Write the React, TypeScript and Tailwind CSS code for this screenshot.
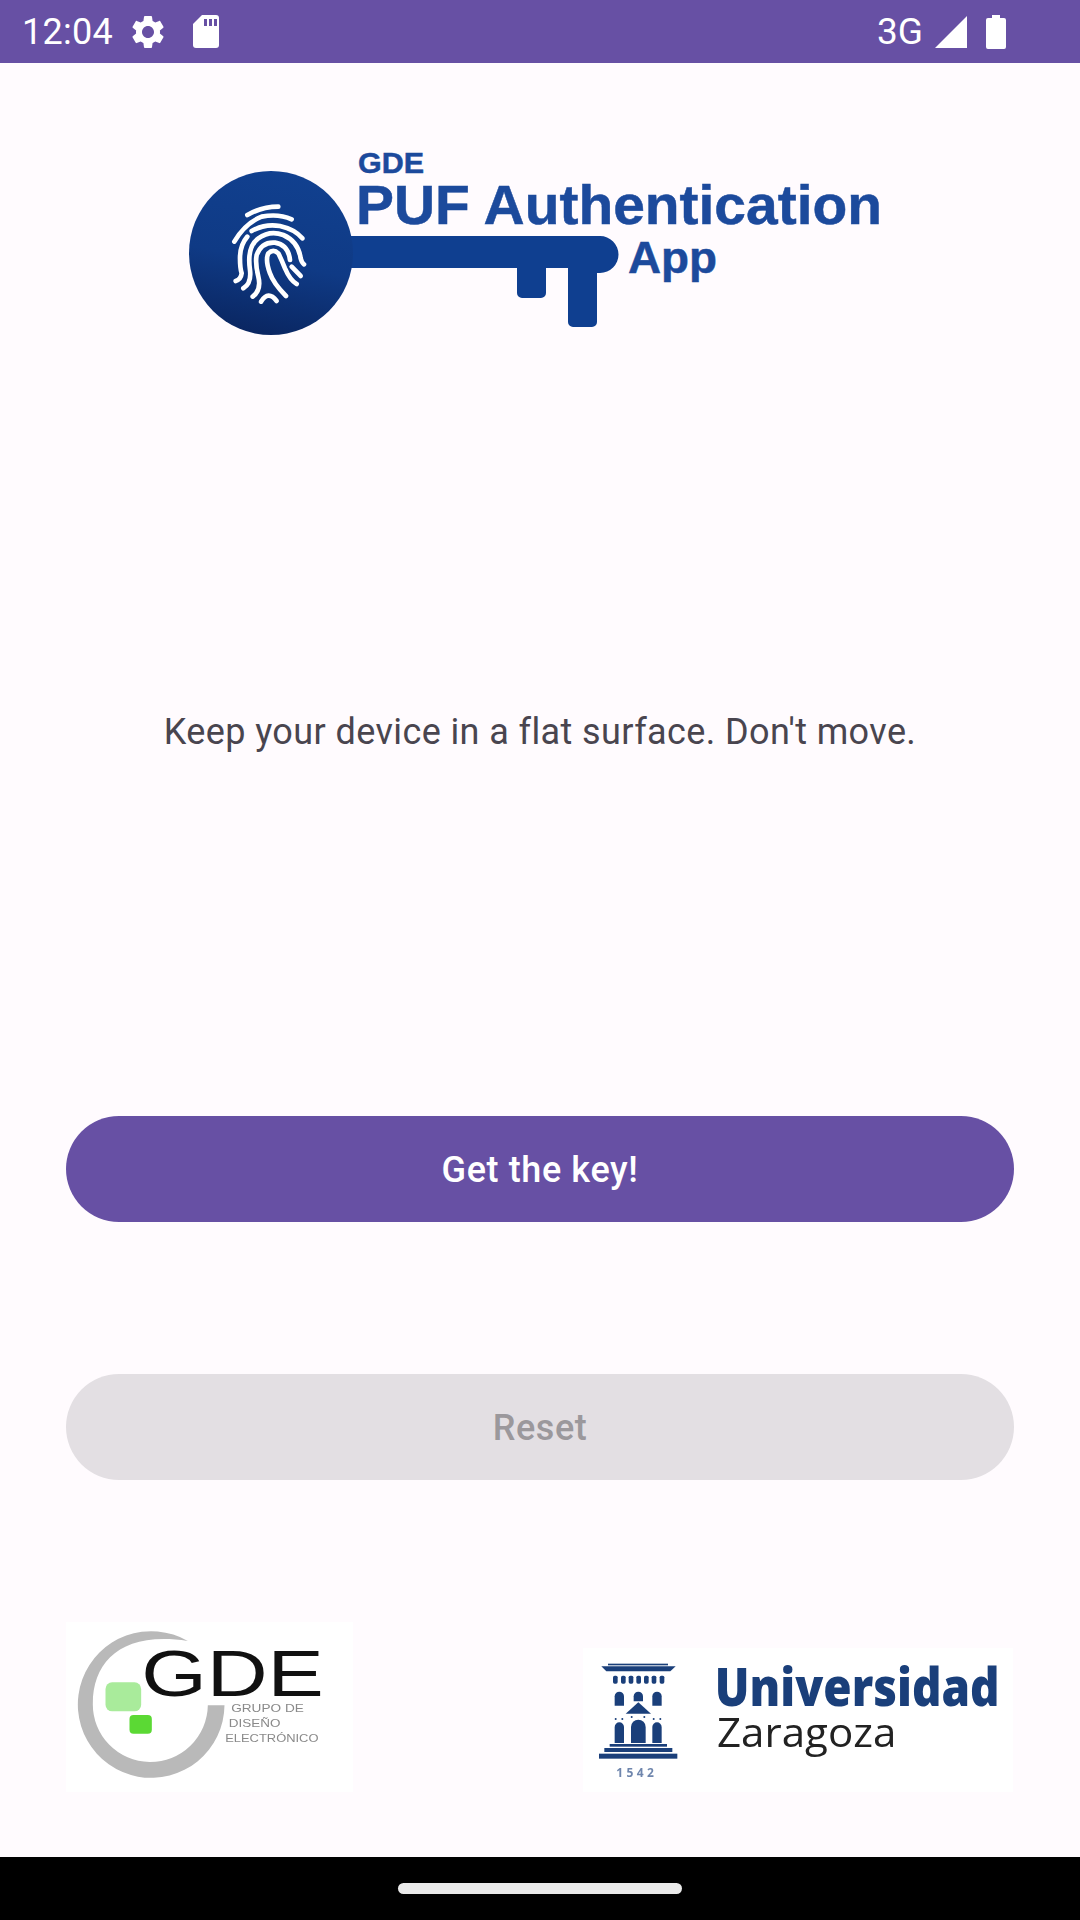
import React from 'react';

const GEAR =
  'M19.14,12.94c0.04-0.3,0.06-0.61,0.06-0.94c0-0.32-0.02-0.64-0.07-0.94l2.03-1.58c0.18-0.14,0.23-0.41,0.12-0.61l-1.92-3.32c-0.12-0.22-0.37-0.29-0.59-0.22l-2.39,0.96c-0.5-0.38-1.03-0.7-1.62-0.94L14.4,2.81c-0.04-0.24-0.24-0.41-0.48-0.41h-3.84c-0.24,0-0.43,0.17-0.47,0.41L9.25,5.35C8.66,5.59,8.12,5.92,7.63,6.29L5.24,5.33c-0.22-0.08-0.47,0-0.59,0.22L2.74,8.87C2.62,9.08,2.66,9.34,2.86,9.48l2.03,1.58C4.84,11.36,4.8,11.69,4.8,12s0.02,0.64,0.07,0.94l-2.03,1.58c-0.18,0.14-0.23,0.41-0.12,0.61l1.92,3.32c0.12,0.22,0.37,0.29,0.59,0.22l2.39-0.96c0.5,0.38,1.03,0.7,1.62,0.94l0.36,2.54c0.05,0.24,0.24,0.41,0.48,0.41h3.84c0.24,0,0.44-0.17,0.47-0.41l0.36-2.54c0.59-0.24,1.13-0.56,1.62-0.94l2.39,0.96c0.22,0.08,0.47,0,0.59-0.22l1.92-3.32c0.12-0.22,0.07-0.47-0.12-0.61L19.14,12.94z M12,15.6c-1.98,0-3.6-1.62-3.6-3.6s1.62-3.6,3.6-3.6s3.6,1.62,3.6,3.6S13.98,15.6,12,15.6z';

const StatusBar: React.FC = () => (
  <div className="h-[63px] bg-[#6750A4] flex items-center text-white shrink-0 font-['Roboto',sans-serif]">
    <span className="ml-[22px] w-[106px] text-[36px] leading-none tracking-[0.3px]">12:04</span>
    <svg viewBox="0 0 24 24" className="w-10 h-10 fill-white">
      <path d={GEAR} />
    </svg>
    <svg viewBox="0 0 26 33" className="ml-[25px] w-[26px] h-[33px]">
      <path d="M9 0h14a3 3 0 0 1 3 3v27a3 3 0 0 1-3 3H3a3 3 0 0 1-3-3V9z" fill="#fff" />
      <path d="M11 4h3v7h-3zM16 4h3v7h-3zM21 4h3v7h-3z" fill="#6750A4" />
    </svg>
    <span className="ml-auto text-[37px] leading-none">3G</span>
    <svg viewBox="0 0 32 32" className="ml-[12px] w-8 h-8">
      <path d="M32 0v32H0z" fill="#fff" />
    </svg>
    <svg viewBox="0 0 20 34" className="ml-[19px] mr-[74px] w-5 h-[34px]">
      <path d="M6 0h8v3h4a2 2 0 0 1 2 2v27a2 2 0 0 1-2 2H2a2 2 0 0 1-2-2V5a2 2 0 0 1 2-2h4z" fill="#fff" />
    </svg>
  </div>
);

// key logo, coordinates are page px offset by (189,140)
const KeyLogo: React.FC = () => (
  <svg viewBox="0 0 700 200" className="ml-[189px] mt-[77px] w-[700px] h-[200px] block">
    <defs>
      <linearGradient id="head" x1="0.6" y1="0" x2="0.4" y2="1">
        <stop offset="0" stopColor="#11408F" />
        <stop offset="0.55" stopColor="#0F3A85" />
        <stop offset="1" stopColor="#0A2661" />
      </linearGradient>
    </defs>
    <path
      d="M150 96H411a18.500 18.500 0 0 1 0 37h-3v49a5 5 0 0 1-5 5h-19a5 5 0 0 1-5-5v-54H357v25a5 5 0 0 1-5 5h-19a5 5 0 0 1-5-5v-25H150z"
      fill="#0F3F90"
    />
    <circle cx="82" cy="113" r="82" fill="url(#head)" />
    <g
      transform="translate(1 30) scale(0.3333)"
      fill="none"
      stroke="#fff"
      strokeWidth="14"
      strokeLinecap="round"
    >
      <path d="M172 135Q215 110 265 110" />
      <path d="M133 215Q165 160 215 140Q265 130 305 148" />
      <path d="M185 183Q225 160 270 168Q315 178 337 205" />
      <path d="M172 200Q150 225 150 265Q150 295 155 310Q153 328 137 333" />
      <path d="M160 355Q185 340 180 300Q170 230 205 205Q240 180 280 195Q325 215 332 265Q335 278 342 283" />
      <path d="M188 380Q215 360 205 320Q195 280 200 255Q215 215 255 218Q295 225 300 270" />
      <path d="M288 378Q250 340 240 310Q225 270 235 250Q250 235 265 250Q275 270 285 295Q300 330 320 342" />
      <path d="M305 290L332 318" />
      <path d="M213 395Q235 360 260 393" />
    </g>
    <g
      fill="#1C4A9C"
      stroke="#1C4A9C"
      strokeWidth="0.5"
      fontFamily="'Liberation Sans', Arial, sans-serif"
      fontWeight="700"
    >
      <text x="169" y="33" fontSize="30" textLength="66" lengthAdjust="spacingAndGlyphs">GDE</text>
      <text x="167" y="84" fontSize="56" textLength="526" lengthAdjust="spacingAndGlyphs">PUF Authentication</text>
      <text x="439" y="133" fontSize="44" textLength="89" lengthAdjust="spacingAndGlyphs">App</text>
    </g>
  </svg>
);

const GdeLogo: React.FC = () => (
  <div className="w-[287px] h-[170px] bg-white">
    <svg viewBox="20 35 860 510" className="w-full h-full blur-[0.6px]">
      <path d="M385 92A220 220 0 1 0 495 285H445A172 172 0 0 1 100 280C100 150 190 62 385 92z" fill="#B9B9B9" />
      <rect x="138" y="216" width="107" height="87" rx="20" fill="#A9EB9B" />
      <rect x="210" y="314" width="67" height="56" rx="12" fill="#5BD934" />
      <text
        x="245"
        y="258"
        fontSize="193"
        textLength="548"
        lengthAdjust="spacingAndGlyphs"
        fill="#111"
        fontFamily="'Liberation Sans', Arial, sans-serif"
      >
        GDE
      </text>
      <g fill="#8a8a8a" fontSize="34" fontFamily="'Liberation Sans', Arial, sans-serif">
        <text x="515" y="304" textLength="218" lengthAdjust="spacingAndGlyphs">GRUPO DE</text>
        <text x="508" y="350" textLength="155" lengthAdjust="spacingAndGlyphs">DISEÑO</text>
        <text x="497" y="396" textLength="280" lengthAdjust="spacingAndGlyphs">ELECTRÓNICO</text>
      </g>
    </svg>
  </div>
);

const UnizarLogo: React.FC = () => (
  <div className="w-[430px] h-[144px] bg-white">
    <svg viewBox="10 25 1290 432" className="w-full h-full blur-[0.4px]">
      <g fill="#1A3F7A">
        <rect x="85" y="72" width="180" height="5" />
        <path d="M65 80H288L272 95H80z" />
        {[100, 124, 147, 170, 193, 216, 240].map((x) => (
          <rect key={x} x={x} y="108" width="14" height="24" rx="5" />
        ))}
        <path d="M105 198V170a14 14 0 0 1 28 0v28z" />
        <path d="M162 185V170a14 14 0 0 1 28 0v15z" />
        <path d="M218 198V170a14 14 0 0 1 28 0v28z" />
        <path d="M138 222L176 188L214 222z" />
        <path d="M105 310V262a14 14 0 0 1 28 0v48z" />
        <path d="M154 310V262a22 22 0 0 1 44 0v48z" />
        <path d="M218 310V262a14 14 0 0 1 28 0v48z" />
        <circle cx="108" cy="238" r="3" />
        <circle cx="128" cy="238" r="3" />
        <circle cx="156" cy="232" r="3" />
        <circle cx="194" cy="232" r="3" />
        <circle cx="222" cy="238" r="3" />
        <circle cx="242" cy="238" r="3" />
        <rect x="90" y="313" width="172" height="8" />
        <rect x="74" y="325" width="204" height="12" />
        <rect x="58" y="342" width="235" height="15" />
      </g>
      <text x="110" y="413" fontSize="36" fontWeight="700" fill="#6f86ad" letterSpacing="10" fontFamily="'Open Sans', sans-serif">1542</text>
      <text x="405" y="200" fontSize="160" fontWeight="800" fill="#1A3F7A" textLength="855" lengthAdjust="spacingAndGlyphs" fontFamily="'Open Sans', sans-serif">Universidad</text>
      <text x="412" y="322" fontSize="118" fill="#222" textLength="538" lengthAdjust="spacingAndGlyphs" fontFamily="'Open Sans', sans-serif">Zaragoza</text>
    </svg>
  </div>
);

export default function App() {
  return (
    <div className="w-[1080px] h-[1920px] bg-[#FFFBFE] flex flex-col overflow-hidden font-['Roboto',sans-serif]">
      <StatusBar />

      <main className="flex-1 flex flex-col">
        <KeyLogo />

        <p className="mt-[368px] text-center text-[36px] leading-[48px] text-[#49454F] tracking-[0.4px]">
          Keep your device in a flat surface. Don't move.
        </p>

        <div className="mt-[360px] px-[66px] flex flex-col gap-[152px]">
          <button className="h-[106px] pt-[2px] rounded-full bg-[#6750A4] text-white text-[36px] font-medium tracking-[0.6px]">
            Get the key!
          </button>
          <button className="h-[106px] pt-[2px] rounded-full bg-[#E3DFE3] text-[#9B989C] text-[36px] font-medium tracking-[0.6px]">
            Reset
          </button>
        </div>

        <div className="mt-[142px] pl-[66px] pr-[67px] flex justify-between items-end">
          <GdeLogo />
          <UnizarLogo />
        </div>
      </main>

      {/* Nav bar */}
      <div className="h-[63px] bg-black flex items-center justify-center shrink-0">
        <div className="w-[284px] h-[11px] rounded-full bg-[#EAEAEA]" />
      </div>
    </div>
  );
}
